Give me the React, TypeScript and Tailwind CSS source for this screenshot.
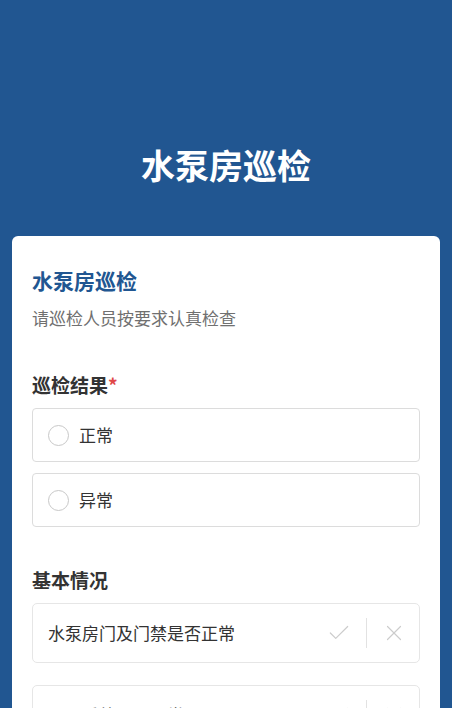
import { Check, X } from "lucide-react";

const font = { fontFamily: '"Noto Sans CJK SC", "Noto Sans", sans-serif' };

function RadioOption({ label }: { label: string }) {
  return (
    <div className="h-[54px] border border-[#dcdcdc] rounded-[4px] flex items-center px-[15px]">
      <span className="w-[21px] h-[21px] rounded-full border border-[#c8c8c8] shrink-0" />
      <span className="ml-[10px] text-[17px] text-[#333] leading-[24px]">{label}</span>
    </div>
  );
}

function CheckRow({ label }: { label: string }) {
  return (
    <div className="h-[60px] border border-[#e6e6e6] rounded-[5px] flex items-center pl-[15px] pr-[12px]">
      <span className="flex-1 text-[17px] text-[#333] leading-[24px]">{label}</span>
      <Check size={26} strokeWidth={1.1} className="text-[#cccccc]" />
      <span className="mx-[14px] w-px h-[30px] bg-[#e2e2e2]" />
      <X size={26} strokeWidth={1.1} className="text-[#cccccc]" />
    </div>
  );
}

export default function App() {
  return (
    <div className="min-h-[708px] bg-[#215691] overflow-hidden" style={font}>
      <div className="h-[236px] pt-[145px] text-center">
        <h1 className="text-white text-[34px] font-bold leading-[40px]">水泵房巡检</h1>
      </div>
      <div className="mx-[12px] bg-white rounded-t-[6px] px-[20px] pt-[30px] pb-[40px]">
        <h2 className="text-[21px] font-bold text-[#215691] leading-[28px]">水泵房巡检</h2>
        <p className="mt-[12px] text-[17px] text-[#707070] leading-[24px]">请巡检人员按要求认真检查</p>

        <div className="mt-[42px] text-[19px] font-bold text-[#333] leading-[26px]">
          巡检结果<span className="text-[#e04848]">*</span>
        </div>
        <div className="mt-[10px] flex flex-col gap-[11px]">
          <RadioOption label="正常" />
          <RadioOption label="异常" />
        </div>

        <div className="mt-[40px] text-[19px] font-bold text-[#333] leading-[26px]">基本情况</div>
        <div className="mt-[10px] flex flex-col gap-[22px]">
          <CheckRow label="水泵房门及门禁是否正常" />
          <CheckRow label="照明系统是否正常" />
        </div>
      </div>
    </div>
  );
}
